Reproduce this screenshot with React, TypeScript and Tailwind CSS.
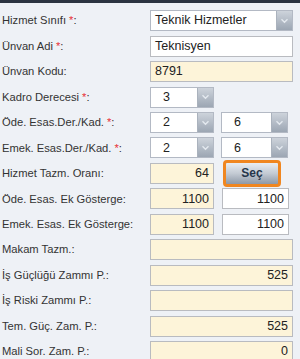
import React from "react";

const font = { fontFamily: '"Liberation Sans", Arial, sans-serif' };

function Chevron() {
  return (
    <svg width="9" height="6" viewBox="0 0 9 6">
      <path d="M1.5 1.2 L4.5 4.2 L7.5 1.2" fill="none" stroke="#e4e9ef" strokeWidth="1.4" />
    </svg>
  );
}

function Select({ value, w, pl }: { value: string; w: string; pl: string }) {
  return (
    <div className={`flex h-[21px] ${w} border border-[#b3b9c4] bg-white`}>
      <div className={`flex flex-1 items-center ${pl} text-[12.5px] text-[#222]`}>{value}</div>
      <div className="flex w-[16px] items-center justify-center border-l border-[#aab2bd] bg-gradient-to-b from-[#cdd3db] to-[#9ca6b3]">
        <Chevron />
      </div>
    </div>
  );
}

function Field({ value, w, ro, right }: { value?: string; w: string; ro?: boolean; right?: boolean }) {
  return (
    <div
      className={`flex h-[21px] ${w} items-center border border-[#b9bbc0] px-[4px] text-[12.5px] text-[#222] ${
        ro ? "bg-[#fdf4d9]" : "bg-white"
      } ${right ? "justify-end" : ""}`}
    >
      {value}
    </div>
  );
}

function Label({ text, req }: { text: string; req?: boolean }) {
  return (
    <div className="flex w-[148px] shrink-0 items-center pl-[2px] text-[11.2px] text-[#333]">
      {text}
      {req && <span className="ml-[3px] text-[#e8333a]">*</span>}:
    </div>
  );
}

export default function App() {
  const rows: { label: string; req?: boolean; field: React.ReactNode }[] = [
    { label: "Hizmet Sınıfı", req: true, field: <Select value="Teknik Hizmetler" w="w-[143px]" pl="pl-[4px]" /> },
    { label: "Ünvan Adi", req: true, field: <Field value="Teknisyen" w="w-[143px]" /> },
    { label: "Ünvan Kodu", field: <Field value="8791" w="w-[143px]" ro /> },
    { label: "Kadro Derecesi", req: true, field: <Select value="3" w="w-[64px]" pl="pl-[12px]" /> },
    {
      label: "Öde. Esas.Der./Kad.",
      req: true,
      field: (
        <div className="flex gap-[7px]">
          <Select value="2" w="w-[64px]" pl="pl-[12px]" />
          <Select value="6" w="w-[67px]" pl="pl-[12px]" />
        </div>
      ),
    },
    {
      label: "Emek. Esas.Der./Kad.",
      req: true,
      field: (
        <div className="flex gap-[7px]">
          <Select value="2" w="w-[64px]" pl="pl-[12px]" />
          <Select value="6" w="w-[67px]" pl="pl-[12px]" />
        </div>
      ),
    },
    {
      label: "Hizmet Tazm. Oranı",
      field: (
        <div className="flex items-center gap-[9px]">
          <Field value="64" w="w-[64px]" ro right />
          <button className="flex h-[27px] w-[58px] items-center justify-center rounded-[4px] border-[3px] border-[#f0861f] bg-gradient-to-b from-[#e9edf1] via-[#c3cad3] to-[#8e99a7] text-[12px] font-bold text-[#26364a]">
            Seç
          </button>
        </div>
      ),
    },
    {
      label: "Öde. Esas. Ek Gösterge",
      field: (
        <div className="flex gap-[8px]">
          <Field value="1100" w="w-[64px]" ro right />
          <Field value="1100" w="w-[67px]" right />
        </div>
      ),
    },
    {
      label: "Emek. Esas. Ek Gösterge",
      field: (
        <div className="flex gap-[8px]">
          <Field value="1100" w="w-[64px]" ro right />
          <Field value="1100" w="w-[67px]" right />
        </div>
      ),
    },
    { label: "Makam Tazm.", field: <Field w="w-[143px]" ro /> },
    { label: "İş Güçlüğü Zammı P.", field: <Field value="525" w="w-[143px]" ro right /> },
    { label: "İş Riski Zammı P.", field: <Field w="w-[143px]" ro /> },
    { label: "Tem. Güç. Zam. P.", field: <Field value="525" w="w-[143px]" ro right /> },
    { label: "Mali Sor. Zam. P.", field: <Field value="0" w="w-[143px]" ro right /> },
  ];

  return (
    <div className="h-[359px] w-[300px] overflow-hidden bg-[#eef1f6]" style={font}>
      <div className="h-[3px] bg-[#2c3441]" />
      <div className="pt-[5px]">
        {rows.map((r, i) => (
          <div key={i} className="flex h-[25.46px] items-center">
            <Label text={r.label} req={r.req} />
            <div className="ml-[2px] flex items-center">{r.field}</div>
          </div>
        ))}
      </div>
    </div>
  );
}
